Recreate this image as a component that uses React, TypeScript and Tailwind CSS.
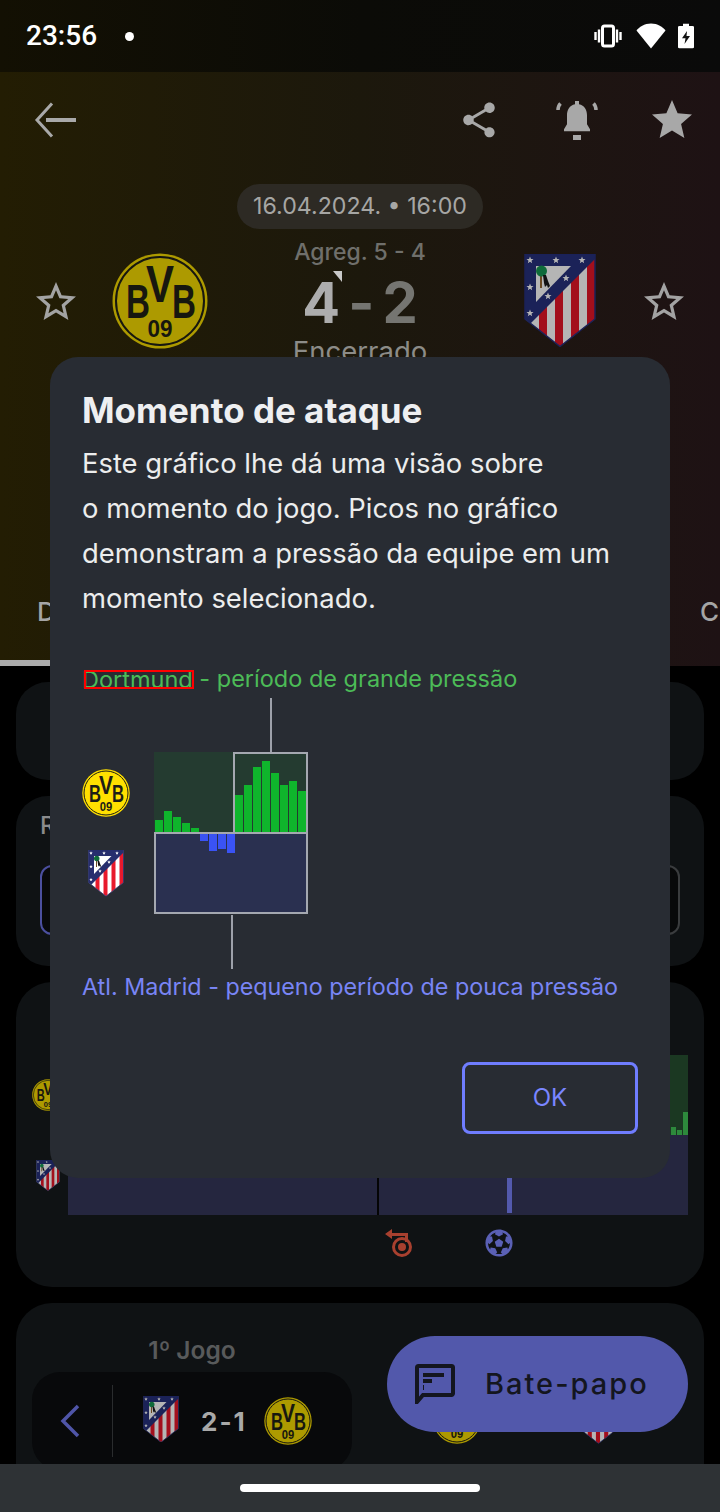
import { useId } from 'react';
import { FaFutbol } from 'react-icons/fa';

const STAR_OUTLINE =
  'M22 9.24l-7.19-.62L12 2 9.19 8.63 2 9.24l5.46 4.73L5.82 21 12 17.27 18.18 21l-1.63-7.03L22 9.24zM12 15.4l-3.76 2.27 1-4.28-3.32-2.88 4.38-.38L12 6.1l1.71 4.04 4.38.38-3.32 2.88 1 4.28L12 15.4z';
const STAR_FILLED = 'M12 17.27L18.18 21l-1.64-7.03L22 9.24l-7.19-.61L12 2 9.19 8.63 2 9.24l5.46 4.73L5.82 21z';
const SHARE =
  'M18 16.08c-.76 0-1.44.3-1.96.77L8.91 12.7c.05-.23.09-.46.09-.7s-.04-.47-.09-.7l7.05-4.11c.54.5 1.25.81 2.04.81 1.66 0 3-1.34 3-3s-1.34-3-3-3-3 1.34-3 3c0 .24.04.47.09.7L8.04 9.81C7.5 9.31 6.79 9 6 9c-1.66 0-3 1.34-3 3s1.34 3 3 3c.79 0 1.5-.31 2.04-.81l7.12 4.16c-.05.21-.08.43-.08.65 0 1.61 1.31 2.92 2.92 2.92s2.92-1.31 2.92-2.92-1.31-2.92-2.92-2.92z';

const homeEarly = [12, 21, 15, 9, 4];
const homeLate = [37, 47, 65, 71, 59, 47, 51, 41];
const awayDip = [7, 17, 15, 19];

function BvbCrest({ size, dim = false }: { size: number; dim?: boolean }) {
  const gold = dim ? '#ad9a00' : '#ffe000';
  const ink = dim ? '#17170f' : '#1d1d16';
  return (
    <svg width={size} height={size} viewBox="0 0 96 96" className="shrink-0">
      <circle cx="48" cy="48" r="47.5" fill={gold} />
      <circle cx="48" cy="48" r="44" fill={gold} stroke={ink} strokeWidth="2" />
      <g fill={ink} fontFamily="'Liberation Sans', sans-serif" fontWeight="700" textAnchor="middle">
        <text x="48" y="49" fontSize="52" textLength="28" lengthAdjust="spacingAndGlyphs">V</text>
        <text x="26" y="65" fontSize="49" textLength="24" lengthAdjust="spacingAndGlyphs">B</text>
        <text x="72" y="65" fontSize="49" textLength="24" lengthAdjust="spacingAndGlyphs">B</text>
        <text x="48" y="84" fontSize="24" textLength="25" lengthAdjust="spacingAndGlyphs">09</text>
      </g>
    </svg>
  );
}

function AtleticoCrest({ width, dim = false }: { width: number; dim?: boolean }) {
  const id = useId();
  const red = dim ? '#a30f1c' : '#e8192c';
  const white = dim ? '#b5b5b5' : '#ffffff';
  const navy = dim ? '#1b2258' : '#272e6e';
  const stars: [number, number][] = [[6, 6], [32, 6], [58, 6], [6, 33], [42, 24], [24, 42], [6, 59]];
  return (
    <svg width={width} height={(width * 93) / 72} viewBox="0 0 72 93" className="shrink-0">
      <clipPath id={id}>
        <path d="M1 0H71V65L36 92.5 1 65Z" />
      </clipPath>
      <g clipPath={`url(#${id})`}>
        <rect width="72" height="93" fill={white} />
        {[15, 31, 47, 63].map((x) => (
          <rect key={x} x={x} y="0" width="8" height="93" fill={red} />
        ))}
        <polygon points="0,0 72,0 72,4 4,72 0,72" fill={navy} />
        <polygon points="12,12 47,12 12,48" fill={white} />
        <rect x="16" y="18" width="2" height="16" fill="#6b4a22" />
        <circle cx="17.5" cy="17" r="5.5" fill="#0f6b3a" />
        <path d="M19 21h3l2 6 2 5-2 2-1-3-2 2-1-4z" fill="#111" />
        {stars.map(([x, y]) => (
          <polygon
            key={`${x}-${y}`}
            transform={`translate(${x} ${y})`}
            points="0,-3.5 1,-1 3.5,-1 1.5,0.7 2.2,3.2 0,1.8 -2.2,3.2 -1.5,0.7 -3.5,-1 -1,-1"
            fill={white}
          />
        ))}
      </g>
      <path d="M1 0H71V65L36 92.5 1 65Z" fill="none" stroke={navy} strokeWidth="1.5" />
    </svg>
  );
}

function Icon24({ d, size, color }: { d: string; size: number; color: string }) {
  return (
    <svg width={size} height={size} viewBox="0 0 24 24" fill={color}>
      <path d={d} />
    </svg>
  );
}

function StatusBar() {
  return (
    <div className="h-[72px] shrink-0 flex items-center pl-[26px] pr-[26px] bg-gradient-to-r from-[#131003] via-[#0b0b07] to-[#0a0a0a] text-white">
      <span className="font-[Roboto,sans-serif] text-[28px] font-medium leading-none">23:56</span>
      <span className="ml-[28px] w-[9px] h-[9px] rounded-full bg-white" />
      <div className="ml-auto flex items-center gap-[14px]">
        <svg width="28" height="24" viewBox="0 0 28 24" fill="none" stroke="#fff" strokeWidth="2.4">
          <rect x="8.5" y="2" width="11" height="20" rx="2" strokeWidth="3" />
          <path d="M1.5 8v8M5 5.500v13M23 5.500v13M26.500 8v8" />
        </svg>
        <svg width="30" height="26" viewBox="0 0 30 26" fill="#fff">
          <path d="M15 25.500 0.500 7.500C3 4 8.500 0.500 15 0.500S27 4 29.500 7.500Z" />
        </svg>
        <svg width="16" height="26" viewBox="0 0 16 36" preserveAspectRatio="none" className="ml-[-2px]">
          <path d="M5 1h6v3h3.500a1.500 1.500 0 0 1 1.500 1.500v28a1.500 1.500 0 0 1-1.500 1.500H1.500A1.500 1.500 0 0 1 0 33.500v-28A1.500 1.500 0 0 1 1.500 4H5Z" fill="#fff" />
          <path d="M9 11 4 21h3.500L6.500 29 12 18H8.500Z" fill="#111" />
        </svg>
      </div>
    </div>
  );
}

function Hero() {
  return (
    <div className="h-[594px] shrink-0 flex flex-col bg-gradient-to-r from-[#231d03] via-[#1c180c] to-[#1e1214] overflow-hidden">
      {/* toolbar */}
      <div className="h-[96px] shrink-0 flex items-center pl-[34px] pr-[24px]">
        <svg width="44" height="36" viewBox="0 0 44 36" fill="none" stroke="#a9a9a9">
          <path d="M18 1.500 3 18l15 16.500" strokeWidth="3" />
          <path d="M12 18h30" strokeWidth="4" />
        </svg>
        <div className="ml-auto flex items-center">
          <Icon24 d={SHARE} size={42} color="#a8a8a8" />
          <svg width="44" height="42" viewBox="0 0 44 42" fill="#a8a8a8" className="ml-[55px]">
            <path d="M20 2h4v3.200c5.500 1.200 8 5.500 8 11v9l3 5v2H9v-2l3-5v-9c0-5.500 2.500-9.800 8-11z" />
            <rect x="18" y="36" width="8" height="5" />
            <path d="M3 11c0-3 1-5 2.500-6.500M41 11c0-3-1-5-2.500-6.500" fill="none" stroke="#a8a8a8" strokeWidth="3.500" />
          </svg>
          <div className="ml-[49px]">
            <Icon24 d={STAR_FILLED} size={48} color="#a8a8a8" />
          </div>
        </div>
      </div>

      {/* date */}
      <div className="mt-[16px] self-center w-[246px] h-[45px] rounded-full bg-[#2d2a24] flex items-center justify-center text-[23.2px] text-[#a6a6a4]">
        16.04.2024. • 16:00
      </div>

      {/* teams and score */}
      <div className="mt-[5px] h-[130px] flex items-start">
        <div className="w-[112px] pt-[44px] pl-[32px] shrink-0">
          <Icon24 d={STAR_OUTLINE} size={48} color="#a3a3a3" />
        </div>
        <div className="pt-[19px] shrink-0">
          <BvbCrest size={96} dim />
        </div>
        <div className="flex-1 flex flex-col items-center min-w-0 pr-[12px]">
          <div className="h-[36px] flex items-center text-[23px] font-medium text-[#6f6f6b]">Agreg. 5 - 4</div>
          <div className="relative mt-[8px] h-[50px] flex items-center gap-[8px] text-[56px] font-bold leading-none">
            <span className="text-[#adadad]">4</span>
            <span className="text-[#757571]">-</span>
            <span className="text-[#757571]">2</span>
            <span className="absolute left-[31px] top-[-7px] w-0 h-0 border-l-[9px] border-l-transparent border-t-[11px] border-t-[#c9c9c9]" />
          </div>
          <div className="mt-[7px] text-[27.5px] leading-[32px] text-[#8c8c88]">Encerrado</div>
        </div>
        <div className="pt-[20px] shrink-0">
          <AtleticoCrest width={72} dim />
        </div>
        <div className="w-[124px] pt-[44px] pl-[44px] shrink-0">
          <Icon24 d={STAR_OUTLINE} size={48} color="#a3a3a3" />
        </div>
      </div>

      {/* tabs */}
      <div className="mt-auto h-[34px] mb-[32px] flex items-center pl-[37px] text-[26px] font-medium text-[#a5a5a5]">
        <span>Detalhes</span>
        <span className="ml-auto w-[20px] whitespace-nowrap">Classificação</span>
      </div>
      <div className="h-[6px] w-[50px] bg-[#ababab] shrink-0" />
    </div>
  );
}

function Cards() {
  return (
    <div className="flex-1 min-h-0 overflow-hidden px-[16px] pt-[16px] flex flex-col gap-[16px] bg-black">
      <div className="h-[98px] shrink-0 rounded-[32px] bg-[#0f1214]" />

      <div className="h-[170px] shrink-0 rounded-[32px] bg-[#0f1214] px-[24px] pt-[14px]">
        <div className="text-[24px] leading-[32px] font-medium text-[#8a8b8c]">Resultado</div>
        <div className="mt-[23px] h-[70px] flex">
          <div className="flex-1 rounded-l-[12px] border-2 border-[#4b4f9e] bg-[#08090a]" />
          <div className="flex-1 rounded-r-[12px] border-2 border-l-0 border-[#3a3c3e] bg-[#08090a]" />
        </div>
      </div>

      <div className="h-[305px] shrink-0 rounded-[36px] bg-[#0f1214] pl-[16px] pr-[16px] pt-[73px] flex flex-col">
        <div className="flex h-[160px]">
          <div className="w-[36px] shrink-0 flex flex-col">
            <div className="h-[80px] pt-[24px]">
              <BvbCrest size={32} dim />
            </div>
            <div className="h-[80px] pt-[25px] pl-[4px]">
              <AtleticoCrest width={24} dim />
            </div>
          </div>
          <div className="flex-1 flex flex-col">
            <div className="h-[80px] bg-[#1b3822] flex items-end justify-end gap-[1px]">
              {[8, 5, 23].map((h, i) => (
                <div key={i} className="w-[5px] bg-[#2d8a3c]" style={{ height: h }} />
              ))}
            </div>
            <div className="h-[80px] bg-[#25263f] relative">
              <div className="absolute left-[309px] bottom-0 top-0 w-[2px] bg-[#050505]" />
              <div className="absolute left-[439px] bottom-[2px] top-0 w-[5px] bg-[#5359ad]" />
            </div>
          </div>
        </div>
        <div className="mt-[14px] flex items-center pl-[353px] h-[28px]">
          <svg width="28" height="28" viewBox="0 0 28 28">
            <path d="M7 0 0 5l7 5V7h13v6h3V4H7Z" fill="#a8402f" />
            <circle cx="17" cy="18" r="8.500" fill="none" stroke="#a8402f" strokeWidth="3" />
            <circle cx="17" cy="18" r="4" fill="#a8402f" />
          </svg>
          <FaFutbol size={28} color="#5a60b5" className="ml-[72px]" />
        </div>
      </div>

      <div className="h-[300px] shrink-0 rounded-t-[36px] bg-[#0f1214] px-[16px] pt-[31px] flex flex-col">
        <div className="w-[320px] text-center text-[24.5px] leading-[32px] font-semibold text-[#585a5b]">1º Jogo</div>
        <div className="mt-[6px] flex items-start">
          <div className="w-[320px] h-[98px] rounded-[28px] bg-[#08090b] flex items-center shrink-0">
            <div className="w-[81px] h-[72px] border-r border-[#2a2c2e] flex items-center pl-[28px]">
              <svg width="22" height="34" viewBox="0 0 22 34" fill="none" stroke="#4f55a8" strokeWidth="3.500">
                <path d="M18 2 3 17l15 15" />
              </svg>
            </div>
            <div className="ml-[30px] mt-[-4px]">
              <AtleticoCrest width={36} dim />
            </div>
            <span className="ml-[22px] text-[26px] font-bold tracking-[2px] text-[#a9a9a9]">2-1</span>
            <div className="ml-[17px]">
              <BvbCrest size={48} dim />
            </div>
          </div>
          <div className="ml-[81px] pt-[24px]">
            <BvbCrest size={48} dim />
          </div>
          <div className="ml-[99px] pt-[24px]">
            <AtleticoCrest width={37} dim />
          </div>
        </div>
      </div>
    </div>
  );
}

function MomentumDialog() {
  return (
    <div className="absolute left-[50px] top-[357px] w-[620px] h-[821px] rounded-[28px] bg-[#282c33] px-[32px] pt-[32px] flex flex-col">
      <h2 className="text-[35px] leading-[42px] font-bold text-[#eeeff1]">Momento de ataque</h2>
      <p className="mt-[10px] text-[27.4px] leading-[45px] text-[#eceded]">
        Este gráfico lhe dá uma visão sobre
        <br />o momento do jogo. Picos no gráfico
        <br />demonstram a pressão da equipe em um
        <br />momento selecionado.
      </p>

      <div className="mt-[44px] h-[28px] flex items-center text-[23.5px] whitespace-nowrap text-[#4cbb57]">
        <span className="relative leading-[19px]">
          Dortmund
          <span className="absolute left-[2px] right-[-1px] top-0 bottom-0 border-2 border-[#ff0000]" />
        </span>
        <span>&nbsp;- período de grande pressão</span>
      </div>

      {/* example chart */}
      <div className="mt-[5px] ml-[188px] w-[2px] h-[54px] bg-[#9da1aa]" />
      <div className="flex">
        <div className="w-[72px] shrink-0 flex flex-col">
          <div className="h-[48px] mt-[17px]">
            <BvbCrest size={48} />
          </div>
          <div className="mt-[33px] pl-[6px]">
            <AtleticoCrest width={36} />
          </div>
        </div>
        <div className="w-[154px] flex flex-col">
          <div className="h-[80px] flex">
            <div className="w-[80px] bg-[#243b30] flex items-end pl-[1px] gap-[1px]">
              {homeEarly.map((h, i) => (
                <div key={i} className="w-[8px] bg-[#0fb52c]" style={{ height: h }} />
              ))}
            </div>
            <div className="flex-1 border-2 border-b-0 border-[#a4a8b0] bg-[#243b30] flex items-end gap-[1px]">
              {homeLate.map((h, i) => (
                <div key={i} className="w-[8px] bg-[#0fb52c]" style={{ height: h }} />
              ))}
            </div>
          </div>
          <div className="h-[82px] border-2 border-[#a4a8b0] bg-[#2a3050] flex items-start pl-[44px] gap-[1px]">
            {awayDip.map((h, i) => (
              <div key={i} className="w-[8px] bg-[#3a53f5]" style={{ height: h }} />
            ))}
          </div>
        </div>
      </div>
      <div className="mt-[1px] ml-[149px] w-[2px] h-[54px] bg-[#9da1aa]" />

      <div className="mt-[3px] h-[30px] flex items-center text-[23.3px] whitespace-nowrap text-[#7985f5]">
        Atl. Madrid - pequeno período de pouca pressão
      </div>

      <button className="mt-[60px] self-end w-[176px] h-[72px] rounded-[8px] border-[3px] border-[#6f7dff] text-[24px] text-[#7a86ff]">
        OK
      </button>
    </div>
  );
}

export default function App() {
  return (
    <div className="relative w-[720px] h-[1512px] overflow-hidden bg-black flex flex-col font-[Inter,sans-serif]">
      <StatusBar />
      <Hero />
      <Cards />

      {/* navigation bar */}
      <div className="h-[48px] shrink-0 bg-[#2e3235] flex items-center justify-center">
        <div className="w-[240px] h-[8px] rounded-full bg-white" />
      </div>

      <MomentumDialog />

      {/* chat button */}
      <div className="absolute left-[387px] top-[1336px] w-[301px] h-[96px] rounded-[48px] bg-[#5258ab] flex items-center pl-[28px]">
        <svg width="40" height="40" viewBox="0 0 40 40" fill="none">
          <path d="M2 38V3.500A1.500 1.500 0 0 1 3.500 2h33A1.500 1.500 0 0 1 38 3.500v26a1.500 1.500 0 0 1-1.500 1.500H8Z" stroke="#14161f" strokeWidth="4" />
          <path d="M8 9h21v4H8zM8 15h9v4H8zM8 21h1v5H8z" fill="#14161f" />
        </svg>
        <span className="ml-[30px] text-[29px] font-medium tracking-[2px] text-[#14161f]">Bate-papo</span>
      </div>
    </div>
  );
}
